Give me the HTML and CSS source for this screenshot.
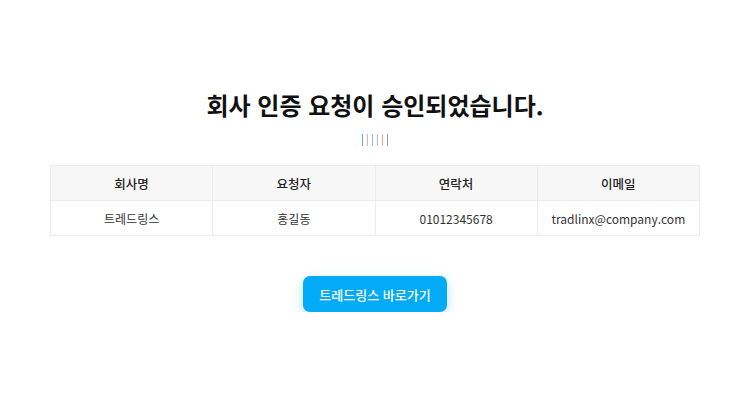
FILE: index.html
```html
<!DOCTYPE html>
<html lang="ko">
<head>
    <meta charset="UTF-8">
    <meta name="viewport" content="width=device-width, initial-scale=1.0">
    <title>회사 인증 완료</title>
    <link rel="stylesheet" href="styles.css">
</head>
<body>
    <div class="wrap">
        <h1 class="title">회사 인증 요청이 승인되었습니다.</h1>
        <div class="deco">
            <span class="c1"></span>
            <span class="c2"></span>
            <span class="c3"></span>
            <span class="c4"></span>
            <span class="c5"></span>
            <span class="c6"></span>
        </div>
        <table class="info">
            <thead>
                <tr>
                    <th>회사명</th>
                    <th>요청자</th>
                    <th>연락처</th>
                    <th>이메일</th>
                </tr>
            </thead>
            <tbody>
                <tr>
                    <td>트레드링스</td>
                    <td>홍길동</td>
                    <td>01012345678</td>
                    <td>tradlinx@company.com</td>
                </tr>
            </tbody>
        </table>
        <button class="go">트레드링스 바로가기</button>
    </div>
</body>
</html>
```

FILE: styles.css
```css
body{
    margin: 0;
    font-family: "Noto Sans CJK KR", "Noto Sans", sans-serif;
    background: #fff;
    color: #222;
}
.wrap{
    padding: 88px 50px 0;
    display: flex;
    flex-direction: column;
    align-items: center;
}
.title{
    margin: 0;
    font-size: 24px;
    font-weight: 700;
    line-height: 34px;
    letter-spacing: 0;
    color: #111;
}
.deco{
    display: flex;
    gap: 4px;
    margin-top: 12px;
    height: 12px;
}
.deco span{
    width: 1px;
    height: 12px;
}
.deco .c1{ background: #5ab5b5; }
.deco .c2{ background: #f4a6a6; }
.deco .c3{ background: #7cc6ee; }
.deco .c4{ background: #ea9be8; }
.deco .c5{ background: #f3a08f; }
.deco .c6{ background: #999; }
.info{
    margin-top: 19px;
    width: 100%;
    border-collapse: collapse;
    table-layout: fixed;
    font-size: 12.5px;
}
.info th, .info td{
    border: 1px solid #ebebeb;
    height: 34px;
    padding: 0 8px;
    text-align: center;
}
.info th{
    background: #f7f7f7;
    font-weight: 500;
    color: #222;
}
.info td{
    color: #333;
    font-size: 12px;
}
.go{
    margin-top: 40px;
    width: 144px;
    height: 36px;
    border: none;
    border-radius: 7px;
    background: #03aaf5;
    color: #fff;
    font-family: inherit;
    font-size: 13px;
    font-weight: 500;
    cursor: pointer;
    box-shadow: 0 4px 12px rgba(3, 170, 245, 0.3);
}
```
